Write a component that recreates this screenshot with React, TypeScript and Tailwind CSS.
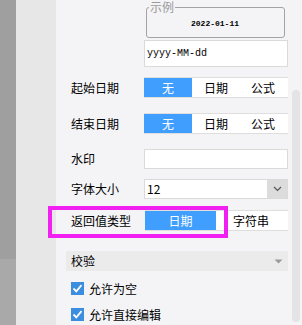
import React from 'react';

const font = { fontFamily: '"Noto Sans CJK SC", "Noto Sans", sans-serif' };

function Segmented({ options, active, widths }: { options: string[]; active: number; widths: string[] }) {
    return (
        <div className="flex h-[21px] bg-white border-y border-[#dedede]">
            {options.map((o, i) => (
                <div
                    key={o}
                    className={`${widths[i]} flex items-center justify-center text-[12px] leading-none ${
                        i === active ? 'bg-[#409eff] text-white' : 'text-black'
                    }`}
                >
                    {o}
                </div>
            ))}
        </div>
    );
}

function Row({ label, children, className = '' }: { label: string; children: React.ReactNode; className?: string }) {
    return (
        <div className={`flex items-center ${className}`}>
            <div className="w-[73px] text-[12px] leading-none text-black">{label}</div>
            <div className="w-[144px]">{children}</div>
        </div>
    );
}

function Check({ label }: { label: string }) {
    return (
        <div className="flex items-center gap-[5px]">
            <div className="w-[13px] h-[13px] bg-[#3b8de0] flex items-center justify-center">
                <svg width="11" height="11" viewBox="0 0 11 11">
                    <path d="M1.5 5.5 L4.3 8.3 L9.5 2.2" stroke="white" strokeWidth="1.8" fill="none" />
                </svg>
            </div>
            <span className="text-[12px] leading-none text-black">{label}</span>
        </div>
    );
}

export default function App() {
    return (
        <div className="w-[302px] h-[325px] overflow-hidden flex bg-[#f4f4f6]" style={font}>
            <div className="w-[16px] flex flex-col">
                <div className="h-[259px] bg-[#9f9f9f]" />
                <div className="flex-1 bg-[#a9a9a9]" />
            </div>
            <div className="w-[40px] bg-[#e7e7e7]" />
            <div className="w-[234px] pl-[15px] pr-[2px] flex flex-col">
                <div className="pl-[73px]">
                    <fieldset className="ml-[2px] w-[139px] h-[38px] border border-[#a3a3a3] rounded-[3px] pl-[2px] pr-0 pb-0 m-0">
                        <legend className="px-[1px] text-[12px] leading-[14px] text-[#9a9a9a]">示例</legend>
                        <div
                            className="text-center text-[8px] font-bold text-black leading-none pt-[6px] pr-[3px]"
                            style={{ fontFamily: '"Liberation Mono", monospace' }}
                        >
                            2022-01-11
                        </div>
                    </fieldset>
                    <div
                        className="mt-[2px] h-[27px] bg-white border border-[#dadada] flex items-center pl-[2px] text-[10px] text-black"
                        style={{ fontFamily: '"Liberation Mono", monospace' }}
                    >
                        yyyy-MM-dd
                    </div>
                </div>
                <Row label="起始日期" className="mt-[10px]">
                    <Segmented options={['无', '日期', '公式']} active={0} widths={['w-[48px]', 'w-[48px]', 'w-[46px]']} />
                </Row>
                <Row label="结束日期" className="mt-[15px]">
                    <Segmented options={['无', '日期', '公式']} active={0} widths={['w-[48px]', 'w-[48px]', 'w-[46px]']} />
                </Row>
                <Row label="水印" className="mt-[15px]">
                    <div className="h-[20px] bg-white border border-[#dadada]" />
                </Row>
                <Row label="字体大小" className="mt-[10px]">
                    <div className="h-[20px] bg-white border border-[#dadada] flex items-center">
                        <span className="flex-1 pl-[2px] text-[12px] leading-none">12</span>
                        <div className="w-[20px] h-full bg-[#dcdcdc] flex items-center justify-center">
                            <svg width="9" height="6" viewBox="0 0 9 6">
                                <path d="M1 1 L4.5 4.5 L8 1" stroke="#555" strokeWidth="1.2" fill="none" />
                            </svg>
                        </div>
                    </div>
                </Row>
                <div className="relative mt-[11px]">
                    <Row label="返回值类型">
                        <div className="flex h-[21px] bg-white border-y border-[#dedede] ml-[1px]">
                            <div className="w-[71px] bg-[#409eff] text-white flex items-center justify-center text-[12px] leading-none">
                                日期
                            </div>
                            <div className="flex-1 flex items-center pl-[17px] text-[12px] leading-none text-black">
                                字符串
                            </div>
                        </div>
                    </Row>
                    <div className="absolute left-[-23px] top-[-4px] w-[180px] h-[32px] border-[4px] border-[#f21ff2]" />
                </div>
                <div className="mt-[20px] -ml-[5px] w-[222px] h-[20px] bg-[#ebebeb] flex items-center pl-[5px] pr-[5px]">
                    <span className="flex-1 text-[12px] leading-none text-black">校验</span>
                    <svg width="9" height="5" viewBox="0 0 9 5">
                        <path d="M0.5 0.5 L8.5 0.5 L4.5 4.5 Z" fill="#9a9a9a" />
                    </svg>
                </div>
                <div className="mt-[11px]">
                    <Check label="允许为空" />
                </div>
                <div className="mt-[13px]">
                    <Check label="允许直接编辑" />
                </div>
            </div>
            <div className="flex-1 pl-[2px] pt-[90px]">
                <div className="w-[8px] h-[232px] rounded-[4px] bg-[#e4e4e6]" />
            </div>
        </div>
    );
}
